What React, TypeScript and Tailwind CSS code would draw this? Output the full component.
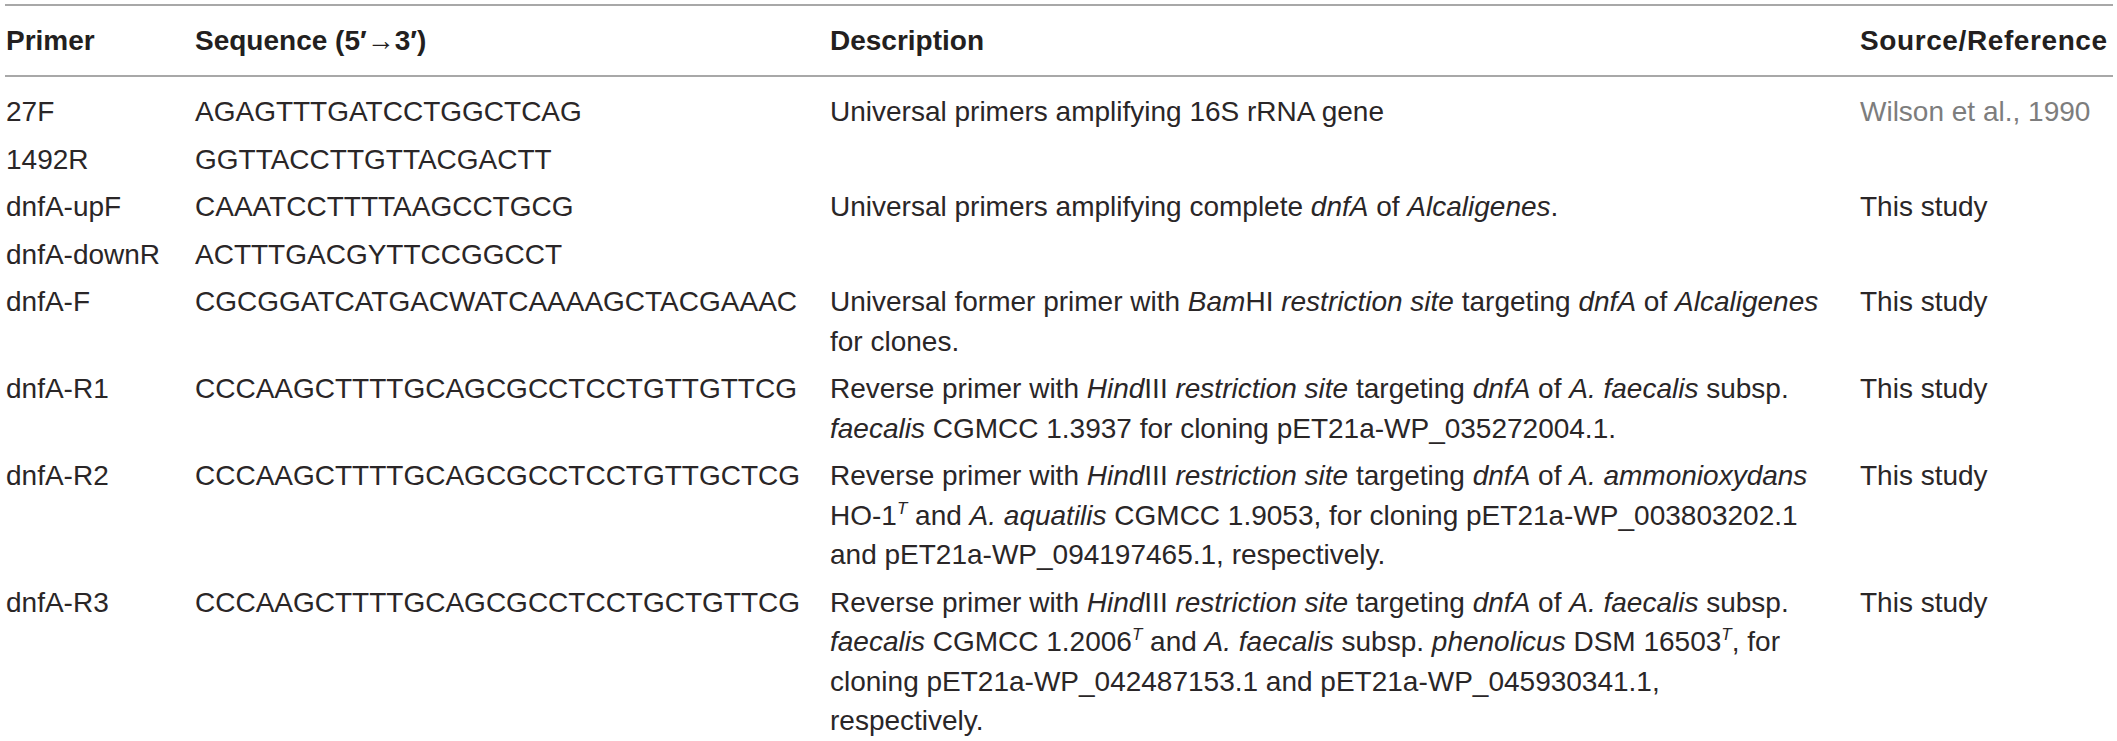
import React from "react";

const Sup = () => (
  <span className="relative -top-[11px] text-[17px] italic leading-none">T</span>
);

type Row = {
  primer: string;
  seq: string;
  desc: React.ReactNode[];
  src?: React.ReactNode;
};

const rows: Row[] = [
  {
    primer: "27F",
    seq: "AGAGTTTGATCCTGGCTCAG",
    desc: [<>Universal primers amplifying 16S rRNA gene</>],
    src: <span className="text-[#7d7d7d]">Wilson et al., 1990</span>,
  },
  { primer: "1492R", seq: "GGTTACCTTGTTACGACTT", desc: [] },
  {
    primer: "dnfA-upF",
    seq: "CAAATCCTTTTAAGCCTGCG",
    desc: [
      <>
        Universal primers amplifying complete <i>dnfA</i> of <i>Alcaligenes</i>.
      </>,
    ],
    src: "This study",
  },
  { primer: "dnfA-downR", seq: "ACTTTGACGYTTCCGGCCT", desc: [] },
  {
    primer: "dnfA-F",
    seq: "CGCGGATCATGACWATCAAAAGCTACGAAAC",
    desc: [
      <>
        Universal former primer with <i>Bam</i>HI <i>restriction site</i> targeting <i>dnfA</i> of{" "}
        <i>Alcaligenes</i>
      </>,
      <>for clones.</>,
    ],
    src: "This study",
  },
  {
    primer: "dnfA-R1",
    seq: "CCCAAGCTTTTGCAGCGCCTCCTGTTGTTCG",
    desc: [
      <>
        Reverse primer with <i>Hind</i>III <i>restriction site</i> targeting <i>dnfA</i> of{" "}
        <i>A. faecalis</i> subsp.
      </>,
      <>
        <i>faecalis</i> CGMCC 1.3937 for cloning pET21a-WP_035272004.1.
      </>,
    ],
    src: "This study",
  },
  {
    primer: "dnfA-R2",
    seq: "CCCAAGCTTTTGCAGCGCCTCCTGTTGCTCG",
    desc: [
      <>
        Reverse primer with <i>Hind</i>III <i>restriction site</i> targeting <i>dnfA</i> of{" "}
        <i>A. ammonioxydans</i>
      </>,
      <>
        HO-1
        <Sup /> and <i>A. aquatilis</i> CGMCC 1.9053, for cloning pET21a-WP_003803202.1
      </>,
      <>and pET21a-WP_094197465.1, respectively.</>,
    ],
    src: "This study",
  },
  {
    primer: "dnfA-R3",
    seq: "CCCAAGCTTTTGCAGCGCCTCCTGCTGTTCG",
    desc: [
      <>
        Reverse primer with <i>Hind</i>III <i>restriction site</i> targeting <i>dnfA</i> of{" "}
        <i>A. faecalis</i> subsp.
      </>,
      <>
        <i>faecalis</i> CGMCC 1.2006
        <Sup /> and <i>A. faecalis</i> subsp. <i>phenolicus</i> DSM 16503
        <Sup />, for
      </>,
      <>cloning pET21a-WP_042487153.1 and pET21a-WP_045930341.1,</>,
      <>respectively.</>,
    ],
    src: "This study",
  },
];

const cols = "grid grid-cols-[189px_635px_1030px_1fr]";

export default function App() {
  return (
    <div
      className="w-[2117px] h-[741px] bg-white overflow-hidden text-[#2a2627] text-[28px]"
      style={{ fontFamily: '"Liberation Sans", Arial, sans-serif' }}
    >
      <div className="pt-[4px] ml-[5px] mr-[4px]">
        <div
          className={`${cols} h-[73px] items-center border-t-2 border-b-2 border-[#a8a8a8] font-bold pl-[1px] text-[#231f20]`}
        >
          <div>Primer</div>
          <div>Sequence (5′→3′)</div>
          <div>Description</div>
          <div className="whitespace-nowrap tracking-[0.6px]">Source/Reference</div>
        </div>
        <div className="pt-[11px] pl-[1px]">
          {rows.map((r) => (
            <div key={r.primer} className={`${cols} py-[4px] leading-[39.5px]`}>
              <div className="whitespace-nowrap">{r.primer}</div>
              <div className="whitespace-nowrap">{r.seq}</div>
              <div className="flex flex-col whitespace-nowrap">
                {r.desc.map((d, i) => (
                  <div key={i}>{d}</div>
                ))}
              </div>
              <div className="whitespace-nowrap">{r.src}</div>
            </div>
          ))}
        </div>
      </div>
    </div>
  );
}
